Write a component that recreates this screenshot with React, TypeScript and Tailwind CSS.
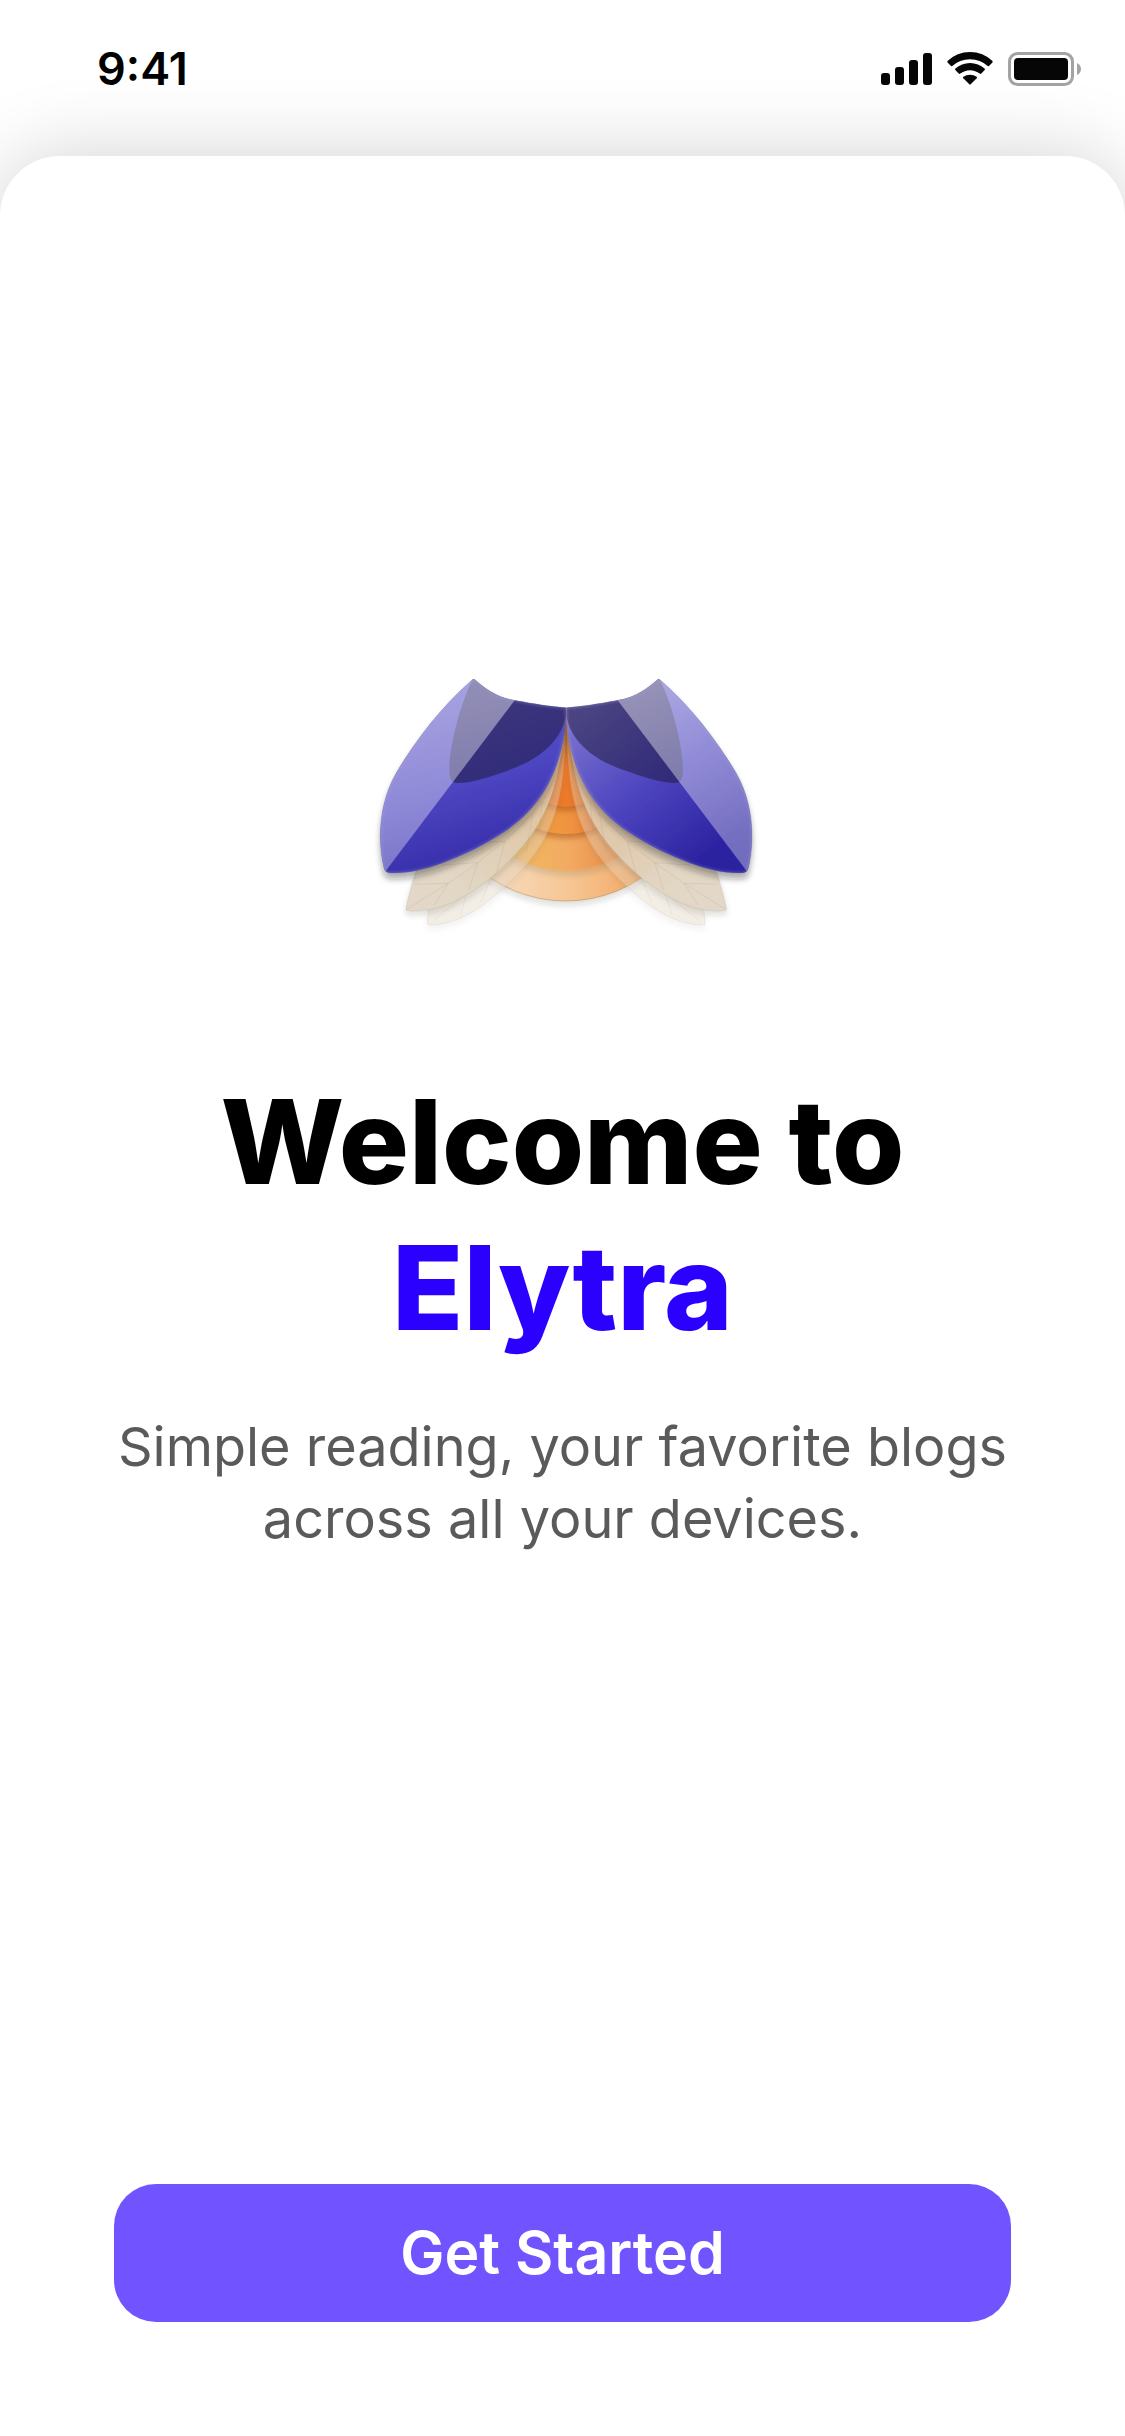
import React from "react";

function StatusIcons() {
  return (
    <svg className="h-[34px] w-[200px]" viewBox="881 52 200 34" role="img" aria-label="Signal, Wi-Fi and battery">
      <g fill="#060606">
        <rect x="881" y="73" width="9" height="12" rx="3" />
        <rect x="895" y="67" width="9" height="18" rx="3" />
        <rect x="909" y="60" width="9" height="25" rx="3" />
        <rect x="923" y="53" width="9" height="32" rx="3" />
        <path d="M947.5 61 Q947 62 947.8 62.8 L951 66 Q951.8 66.5 952.6 65.8 Q959.5 59.4 970 59.2 Q980.5 59.4 987.4 65.8 Q988.2 66.5 989 66 L992.2 62.8 Q993 62 992.5 61 Q983 52 970 52 Q957 52 947.5 61 Z" />
        <path d="M955.3 70 L958.7 73.5 Q959.5 74.2 960.3 73.6 Q964.5 70.3 970 70.2 Q975.5 70.3 979.7 73.6 Q980.5 74.2 981.3 73.5 L984.7 70 Q985.3 69.2 984.6 68.5 Q978.5 63.2 970 63 Q961.5 63.2 955.4 68.5 Q954.7 69.2 955.3 70 Z" />
        <path d="M963.3 78.2 L969.3 84.3 Q970 85 970.7 84.3 L976.7 78.2 Q977.4 77.4 976.6 76.8 Q973.8 74.8 970 74.7 Q966.2 74.8 963.4 76.8 Q962.6 77.4 963.3 78.2 Z" />
        <rect x="1014" y="58" width="54" height="22" rx="4" />
      </g>
      <rect x="1009.5" y="53.5" width="63" height="31" rx="8" fill="none" stroke="#a3a3a3" strokeWidth="3" />
      <path d="M1077 63 Q1081 65 1081 69 Q1081 73 1077 75 Z" fill="#a3a3a3" />
    </svg>
  );
}

const ELYTRON =
  "M335 60 Q341 55 347 62 C372 84 410 113 463 121 C520 132 590 142 617 143 C617 200 612 245 594 300 C565 390 515 460 430 517 C370 557 310 585 245 610 C190 630 130 643 84 638 Q74 636 71 625 C53 550 52 435 108 338 C160 250 240 142 335 60 Z";
const HINDWING =
  "M617 160 C606 290 590 370 560 440 C525 520 480 575 390 655 C310 715 240 758 142 752 Q135 751 137 744 Q148 690 172 620 L500 380 Z";
const UNDERWING =
  "M617 170 C614 290 608 370 592 430 C570 515 535 585 445 670 C380 732 300 795 206 795 Q200 795 201 788 L206 730 L480 440 Z";

function Wing({ shade }: { shade: string }) {
  return (
    <>
      <path
        d={UNDERWING}
        fill="#e6d9c6"
        fillOpacity="0.36"
        stroke="#b5a690"
        strokeOpacity="0.4"
        strokeWidth="1.5"
        filter="url(#faint)"
      />
      <path d="M300 765 L320 700 M362 725 L392 655 L455 610 M220 780 L320 700" fill="none" stroke="#9c8f7c" strokeOpacity="0.16" strokeWidth="2" />
      <path d={HINDWING} fill="url(#hind)" filter="url(#soft)" />
      <path d={HINDWING} fill="none" stroke="#a3977e" strokeOpacity="0.45" strokeWidth="1.5" />
      <path
        d="M142 746 L264 670 L352 608 L434 544 L518 458 L560 380 M162 673 L264 670 L222 735 M245 615 L352 608 L325 690 M335 548 L434 544 L408 640 M518 458 L498 575 M545 425 L538 510"
        fill="none"
        stroke="#9c8f7c"
        strokeOpacity="0.22"
        strokeWidth="2.5"
        strokeLinejoin="round"
      />
      <path d={ELYTRON} fill={shade} filter="url(#drop)" />
      <g clipPath="url(#elytron)">
        <path
          d="M340 50 C285 165 262 300 268 345 Q271 369 292 369 C340 369 405 345 460 325 C550 290 616 230 620 143 L620 50 Z"
          fill="#1c1736"
          fillOpacity="0.51"
        />
        <path d="M463 121 L72 638 L20 638 L20 30 L463 30 Z" fill="url(#sheen)" />
        <path d={ELYTRON} fill="none" stroke="#a9a2f4" strokeOpacity="0.25" strokeWidth="9" filter="url(#edge)" />
      </g>
      <path d={ELYTRON} fill="none" stroke="#6f6a78" strokeOpacity="0.5" strokeWidth="1.5" />
    </>
  );
}

function ElytraLogo() {
  return (
    <svg className="h-[280px] w-[400px]" viewBox="8 0 1200 840" role="img" aria-label="Elytra logo">
      <defs>
        <linearGradient id="left" gradientUnits="userSpaceOnUse" x1="260" y1="130" x2="400" y2="580">
          <stop offset="0" stopColor="#6058c8" />
          <stop offset="0.55" stopColor="#4c44c0" />
          <stop offset="1" stopColor="#372eaa" />
        </linearGradient>
        <linearGradient id="right" gradientUnits="userSpaceOnUse" x1="560" y1="150" x2="190" y2="600">
          <stop offset="0" stopColor="#7a72d0" />
          <stop offset="0.5" stopColor="#4d44bf" />
          <stop offset="1" stopColor="#2a219f" />
        </linearGradient>
        <linearGradient id="sheen" x1="0" y1="0" x2="0" y2="1">
          <stop offset="0" stopColor="#fff" stopOpacity="0.44" />
          <stop offset="1" stopColor="#fff" stopOpacity="0.33" />
        </linearGradient>
        <linearGradient id="hind" gradientUnits="userSpaceOnUse" x1="610" y1="300" x2="250" y2="740">
          <stop offset="0" stopColor="#e6cdb2" stopOpacity="0.65" />
          <stop offset="0.4" stopColor="#e0cdb2" stopOpacity="0.86" />
          <stop offset="1" stopColor="#e3d8c8" />
        </linearGradient>
        <linearGradient id="ringOuter" gradientUnits="userSpaceOnUse" x1="400" y1="0" x2="840" y2="0">
          <stop offset="0" stopColor="#f8dbbd" />
          <stop offset="0.5" stopColor="#f6c795" />
          <stop offset="1" stopColor="#f2a864" />
        </linearGradient>
        <linearGradient id="ringThird" gradientUnits="userSpaceOnUse" x1="460" y1="0" x2="780" y2="0">
          <stop offset="0" stopColor="#f1b960" />
          <stop offset="0.5" stopColor="#f2ab62" />
          <stop offset="1" stopColor="#e98b48" />
        </linearGradient>
        <linearGradient id="ringSecond" gradientUnits="userSpaceOnUse" x1="530" y1="0" x2="710" y2="0">
          <stop offset="0" stopColor="#f0a040" />
          <stop offset="0.6" stopColor="#f0913f" />
          <stop offset="1" stopColor="#e97d38" />
        </linearGradient>
        <clipPath id="elytron">
          <path d={ELYTRON} />
        </clipPath>
        <clipPath id="body">
          <path d="M617 150 L335 610 L335 800 L900 800 L900 610 Z" />
        </clipPath>
        <filter id="drop" x="-20%" y="-20%" width="140%" height="140%">
          <feDropShadow dx="0" dy="18" stdDeviation="10" floodColor="#201c18" floodOpacity="0.36" />
        </filter>
        <filter id="soft" x="-20%" y="-20%" width="140%" height="140%">
          <feDropShadow dx="0" dy="12" stdDeviation="10" floodColor="#30261a" floodOpacity="0.16" />
        </filter>
        <filter id="faint" x="-20%" y="-20%" width="140%" height="140%">
          <feDropShadow dx="0" dy="12" stdDeviation="10" floodColor="#30261a" floodOpacity="0.14" />
        </filter>
        <filter id="ring" x="-20%" y="-20%" width="140%" height="140%">
          <feDropShadow dx="0" dy="14" stdDeviation="8" floodColor="#a84f18" floodOpacity="0.5" />
        </filter>
        <filter id="edge">
          <feGaussianBlur stdDeviation="3" />
        </filter>
      </defs>
      <g clipPath="url(#body)">
        <circle cx="617" cy="318" r="405" fill="url(#ringOuter)" stroke="#96703f" strokeOpacity="0.6" strokeWidth="2" filter="url(#soft)" />
        <circle cx="617" cy="302" r="330" fill="url(#ringThird)" filter="url(#soft)" />
        <circle cx="617" cy="292" r="230" fill="url(#ringSecond)" filter="url(#ring)" />
        <circle cx="617" cy="290" r="150" fill="#ec7a2c" filter="url(#ring)" />
      </g>
      <Wing shade="url(#left)" />
      <g transform="matrix(-1 0 0 1 1235 0)">
        <Wing shade="url(#right)" />
      </g>
    </svg>
  );
}

export default function App() {
  return (
    <div className="flex min-h-screen flex-col overflow-hidden bg-white font-['Inter',sans-serif]">
      <header className="flex h-[156px] items-start justify-between pr-11 pl-[97px]">
        <time className="mt-[39px] text-[45px] leading-[60px] font-semibold text-black">9:41</time>
        <div className="mt-[52px]">
          <StatusIcons />
        </div>
      </header>
      <main className="relative flex flex-1 flex-col items-center rounded-t-[60px] bg-white px-[114px] pb-[114px] text-center shadow-[0_0_80px_rgba(0,0,0,0.18)]">
        <div className="mt-[504px]">
          <ElytraLogo />
        </div>
        <h1 className="mt-[129px] text-[117px] leading-[146px] font-extrabold text-black">
          Welcome to
          <span className="block text-[#2b00ff]">Elytra</span>
        </h1>
        <p className="mt-[50px] text-[54px] leading-[72px] text-[#5a5a5a]">
          Simple reading, your favorite blogs
          <br />
          across all your devices.
        </p>
        <button type="button" className="mt-auto h-[138px] w-full rounded-[42px] bg-[#7154ff] text-[59px] font-semibold text-white">
          Get Started
        </button>
      </main>
    </div>
  );
}
